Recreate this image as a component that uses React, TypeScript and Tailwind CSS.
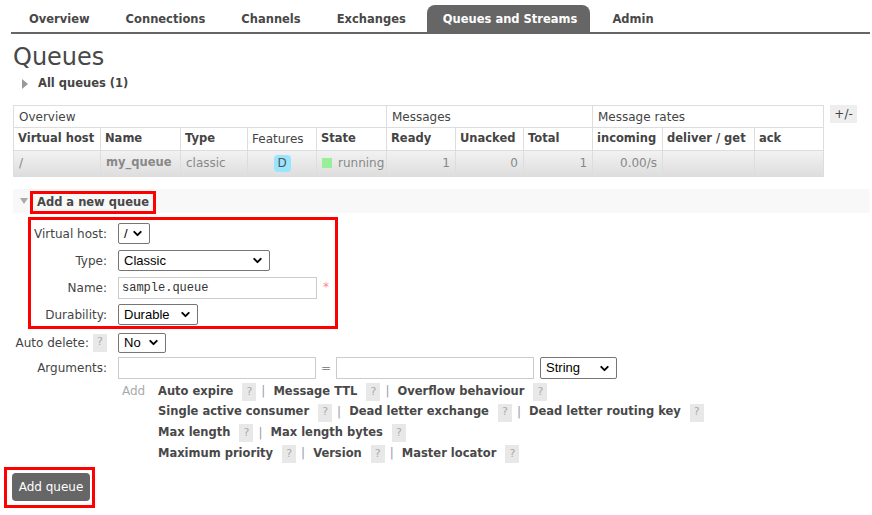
import { ChevronDown } from 'lucide-react';

const tabs = ['Overview', 'Connections', 'Channels', 'Exchanges', 'Queues and Streams', 'Admin'];

function Help() {
  return (
    <span className="inline-flex items-center justify-center w-[14px] h-[18px] bg-[#e8e8e8] text-[#aaa] text-[11px] font-normal">?</span>
  );
}

function Select({ value, width, height = 21 }: { value: string; width: number; height?: number }) {
  return (
    <div
      className="flex items-center justify-between border border-[#767676] bg-white pl-[5px] pr-[5px] text-[13px] text-black rounded-[2px]"
      style={{ width, height, fontFamily: '"Liberation Sans", Arial, sans-serif' }}
    >
      <span>{value}</span>
      <ChevronDown size={13} strokeWidth={3.5} />
    </div>
  );
}

function Input({ width, value }: { width: number; value?: string }) {
  return (
    <div
      className="flex items-center border border-[#ccc] bg-white h-[22px] px-[3px] text-[12px] text-[#333]"
      style={{ width, fontFamily: '"Liberation Mono", "Courier New", monospace' }}
    >
      {value}
    </div>
  );
}

function Links({ items }: { items: string[] }) {
  return (
    <div className="flex items-center h-[20.7px]">
      {items.map((label, i) => (
        <span key={label} className="flex items-center">
          <span className="font-bold text-[11.5px] text-[#484848]">{label}</span>
          <span className="ml-[9px]"><Help /></span>
          {i < items.length - 1 && <span className="text-[#99a] ml-[5px] mr-[8px]">|</span>}
        </span>
      ))}
    </div>
  );
}

export default function App() {
  const th = 'border border-[#ddd] px-[4px] text-left font-bold text-[11.5px] text-[#444] whitespace-nowrap';
  const td = 'border border-[#ddd] px-[5px] align-top pt-[3px] text-[#888] whitespace-nowrap';
  return (
    <div className="w-[872px] h-[515px] bg-white text-[12px] text-[#444] overflow-hidden" style={{ fontFamily: '"DejaVu Sans", Verdana, sans-serif' }}>
      {/* tabs */}
      <div className="pt-[5px] pl-[11px] pr-[2px]">
        <div className="flex border-b-2 border-[#666] h-[29px]">
          {tabs.map((t) => (
            <div
              key={t}
              className={`flex items-center pt-[3px] font-bold text-[11.5px] rounded-t-[8px] ${t === 'Queues and Streams' ? 'bg-[#666] text-white ml-[3px] pl-[16px] pr-[13px] mr-[4px]' : 'px-[18px] text-[#484848]'}`}
            >
              {t}
            </div>
          ))}
        </div>
      </div>

      <div className="pl-[13px] pr-[2px]">
        <h1 className="text-[24px] leading-[28px] mt-[9px] text-[#484848]">Queues</h1>
        <div className="flex items-center mt-[3px] ml-[9px] font-bold text-[11.5px] h-[20px]">
          <span className="w-0 h-0 border-y-[5px] border-y-transparent border-l-[6px] border-l-[#999] mr-[10px]" />
          All queues (1)
        </div>

        {/* table */}
        <div className="flex items-start mt-[11px]">
          <table className="table-fixed border-collapse w-[810px] text-[12px]">
            <colgroup>
              {[87, 80, 67, 69, 70, 69, 68, 69, 70, 92, 69].map((w, i) => (
                <col key={i} style={{ width: w }} />
              ))}
            </colgroup>
            <tbody>
              <tr className="h-[22px]">
                <td colSpan={5} className="border border-[#ddd] px-[5px] text-[#444]">Overview</td>
                <td colSpan={3} className="border border-[#ddd] px-[5px] text-[#444]">Messages</td>
                <td colSpan={3} className="border border-[#ddd] px-[5px] text-[#444]">Message rates</td>
              </tr>
              <tr className="h-[23px]">
                <th className={th}>Virtual host</th>
                <th className={th}>Name</th>
                <th className={th}>Type</th>
                <th className="border border-[#ddd] px-[4px] text-left font-normal text-[#444]">Features</th>
                <th className={th}>State</th>
                <th className={th}>Ready</th>
                <th className={th}>Unacked</th>
                <th className={th}>Total</th>
                <th className={th}>incoming</th>
                <th className={th}>deliver / get</th>
                <th className={th}>ack</th>
              </tr>
              <tr className="h-[26px] bg-gradient-to-b from-[#f2f2f2] to-[#dddddd]">
                <td className={td}>/</td>
                <td className={`${td} font-bold text-[11.5px] text-[#333]`}>my_queue</td>
                <td className={td}>classic</td>
                <td className={`${td} text-center`}>
                  <span className="inline-flex items-center justify-center w-[17px] h-[17px] rounded-[4px] bg-[#99e5ff] text-[#555] text-[12px]">D</span>
                </td>
                <td className={td}>
                  <span className="inline-flex items-center">
                    <span className="w-[10px] h-[10px] bg-[#99ee99] mr-[6px]" />running
                  </span>
                </td>
                <td className={`${td} text-right`}>1</td>
                <td className={`${td} text-right`}>0</td>
                <td className={`${td} text-right`}>1</td>
                <td className={`${td} text-right`}>0.00/s</td>
                <td className={td}></td>
                <td className={td}></td>
              </tr>
            </tbody>
          </table>
          <div className="ml-[6px] w-[27px] h-[18px] bg-[#eee] flex items-center justify-center text-[#444] text-[12px]">+/-</div>
        </div>

        {/* Add a new queue header */}
        <div className="mt-[12px] bg-[#f8f8f8] h-[24px] flex items-center">
          <span className="ml-[7px] w-0 h-0 border-x-[4px] border-x-transparent border-t-[6px] border-t-[#aaa] mr-[2px]" />
          <div className="border-[3px] border-[#f00] h-[23px] mt-[3px] px-[4px] flex items-center font-bold text-[11.5px] text-[#484848]">Add a new queue</div>
        </div>
      </div>

      {/* form */}
      <div className="pl-[13px] mt-[4px]">
        <div className="ml-[15px] w-[310px] border-[3px] border-[#f00] pt-[3px] pb-[1px] flex flex-col gap-[6px]">
          <div className="flex items-center h-[21px]">
            <span className="w-[76px] text-right">Virtual host:</span>
            <span className="ml-[11px]"><Select value="/" width={32} /></span>
          </div>
          <div className="flex items-center h-[21px]">
            <span className="w-[76px] text-right">Type:</span>
            <span className="ml-[11px]"><Select value="Classic" width={152} /></span>
          </div>
          <div className="flex items-center h-[21px]">
            <span className="w-[76px] text-right">Name:</span>
            <span className="ml-[11px]"><Input width={199} value="sample.queue" /></span>
            <span className="ml-[6px] text-[#f88] text-[12px] -mt-[2px]">*</span>
          </div>
          <div className="flex items-center h-[21px]">
            <span className="w-[76px] text-right">Durability:</span>
            <span className="ml-[11px]"><Select value="Durable" width={80} /></span>
          </div>
        </div>

        <div className="flex items-center h-[21px] mt-[3px]">
          <span className="w-[94px] flex items-center justify-end gap-[4px]">Auto delete: <Help /></span>
          <span className="ml-[11px]"><Select value="No" width={48} height={20} /></span>
        </div>

        <div className="flex items-center h-[22px] mt-[4px]">
          <span className="w-[94px] text-right">Arguments:</span>
          <span className="ml-[11px]"><Input width={198} /></span>
          <span className="mx-[5px] text-[#888]">=</span>
          <Input width={198} />
          <span className="ml-[6px]"><Select value="String" width={77} height={22} /></span>
        </div>

        <div className="flex mt-[2px] ml-[109px]">
          <span className="text-[#aaa] w-[36px] h-[20px] flex items-center">Add</span>
          <div className="flex flex-col">
            <Links items={['Auto expire', 'Message TTL', 'Overflow behaviour']} />
            <Links items={['Single active consumer', 'Dead letter exchange', 'Dead letter routing key']} />
            <Links items={['Max length', 'Max length bytes']} />
            <Links items={['Maximum priority', 'Version', 'Master locator']} />
          </div>
        </div>
      </div>

      <div className="ml-[4px] mt-[3px] w-[91px] h-[41px] border-[3px] border-[#f00] pl-[5px] pt-[3px]">
        <div className="w-[78px] h-[28px] bg-[#666] rounded-[4px] text-white flex items-center justify-center text-[12px]">Add queue</div>
      </div>
    </div>
  );
}
